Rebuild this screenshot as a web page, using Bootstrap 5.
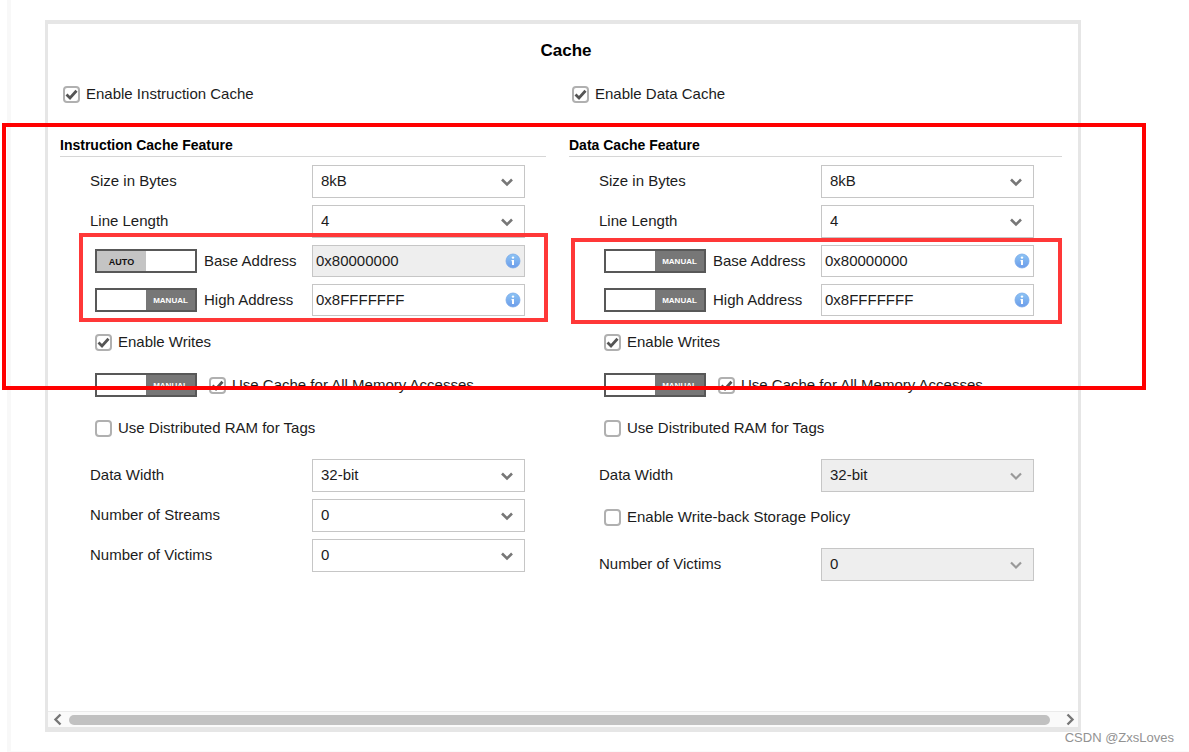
<!DOCTYPE html>
<html lang="en">
<head>
<meta charset="utf-8">
<meta name="viewport" content="width=device-width, initial-scale=1">
<title>Cache</title>
<link rel="stylesheet" href="https://cdn.jsdelivr.net/npm/bootstrap@5.3.0/dist/css/bootstrap.min.css">
<style>
  body { font: 15px/20px "Liberation Sans", Arial, sans-serif; color: #1c1c1c; background: #fff; }
  .page-frame { min-height: 100vh; margin-left: 7px; padding: 20px 108px 19px 34px; border-left: 4px solid #f8f8f8; border-bottom: 1px solid #fafafa; }
  .panel { border: solid #e6e6e6; border-width: 4px 3px 5px; }
  .panel-body { padding: 15px 0 20px 12px; }
  .panel-title { font-size: 17px; line-height: 24px; font-weight: bold; color: #000; margin: 0 0 19px; padding-right: 6px; }
  .section-title { font-size: 14px; line-height: 22px; font-weight: bold; color: #000; border-bottom: 1px solid #d6d6d6; margin: 28px 23px 8px 0; }
  .section-title.wide { margin-right: 16px; }
  .fields { display: flex; flex-direction: column; gap: 7px; padding-right: 44px; }
  .field { display: flex; align-items: center; }
  .field > label, .field > .lead-cell { flex: 0 0 252px; padding-left: 30px; padding-bottom: 2px; }
  .field > .lead-cell { display: flex; align-items: center; gap: 7px; padding-left: 35px; padding-bottom: 0; }
  .field .form-select, .field .form-control { font-size: 15px; line-height: 20px; color: #1c1c1c; border: 1px solid #c6c6c6; border-radius: 0; }
  .field .form-select { height: 33px; padding: 4px 36px 6px 8px; background-position: right 10px center; background-size: 14px 14px;
    background-image: url("data:image/svg+xml,%3Csvg xmlns='http://www.w3.org/2000/svg' viewBox='0 0 14 14'%3E%3Cpath d='M2 4.5 7 9.5 12 4.5' fill='none' stroke='%23777' stroke-width='2.6'/%3E%3C/svg%3E"); }
  .field .form-select:disabled { background-color: #eee; opacity: 1;
    background-image: url("data:image/svg+xml,%3Csvg xmlns='http://www.w3.org/2000/svg' viewBox='0 0 14 14'%3E%3Cpath d='M2 4.5 7 9.5 12 4.5' fill='none' stroke='%23999' stroke-width='2.2'/%3E%3C/svg%3E"); }
  .field .form-control { height: 32px; padding: 4px 30px 6px 3px; }
  .field .form-control:disabled { background: #eee; }
  .info { position: absolute; right: 4px; top: 8px; line-height: 0; border: 0; padding: 0; background: none; }
  .addresses { position: relative; display: flex; flex-direction: column; gap: 7px; margin-bottom: 1px; }
  .opt { display: flex; align-items: center; gap: 12px; height: 36px; padding-left: 35px; }
  .opt + .field { margin-top: 6px; }
  .tick { display: flex; align-items: center; gap: 6px; padding-left: 3px; height: 24px; }
  .opt .tick { padding-left: 0; }
  .tick .form-check-input { width: 17px; height: 17px; margin: 0; float: none; border: 2px solid #b0b0b0; border-radius: 4px; background-color: #fff; }
  .tick .form-check-input:checked { background-color: #fff; border-color: #b0b0b0; background-size: 13px 13px;
    background-image: url("data:image/svg+xml,%3Csvg xmlns='http://www.w3.org/2000/svg' viewBox='0 0 13 13'%3E%3Cpath d='M1.5 6.5 5 10 11.5 2.8' fill='none' stroke='%23555' stroke-width='2.8'/%3E%3C/svg%3E"); }
  .mode { display: flex; width: 102px; height: 24px; padding: 0; border: 2px solid #585858; background: #fff; font: bold 8px/20px "Liberation Sans", Arial, sans-serif; color: #fff; }
  .mode span { width: 50%; height: 20px; background: #777; padding-top: 1px; }
  .mode .auto { background: #c4c4c4; color: #111; font-size: 9px; }
  .mode.manual { justify-content: flex-end; }
  .mark-box { position: absolute; border: 4px solid #ff3838; pointer-events: none; }
  .mark-left { inset: -12px -23px -6px 19px; }
  .mark-right { inset: -7px -28px -8px 2px; }
  .mark-wide { top: 123px; height: 267px; left: 2px; right: 43px; border-color: #f00; }
  .h-scroll { display: flex; align-items: center; height: 16px; padding: 0 3px 0 5px; background: #fafafa; border-top: 1px solid #ebebeb; }
  .h-scroll button { border: 0; padding: 0; background: none; line-height: 0; }
  .thumb { flex: 1; height: 10px; margin: 0 16px 0 7px; border-radius: 5px; background: #c1c1c1; }
  .watermark { position: absolute; right: 15px; bottom: 4px; font-size: 13px; color: #929292; }
</style>
</head>
<body class="position-relative">
<svg width="0" height="0" class="position-absolute" aria-hidden="true">
  <defs>
    <linearGradient id="blue" x1="0" y1="0" x2="0" y2="1"><stop offset="0" stop-color="#8cc4f4"/><stop offset="1" stop-color="#6c9cea"/></linearGradient>
    <symbol id="info" viewBox="0 0 16 16"><circle cx="8" cy="8" r="7" fill="url(#blue)" stroke="#78a8e8" stroke-width=".8"/><circle cx="8" cy="4.6" r="1.2" fill="#fff"/><path d="M6.5 7h2.5v5H7V8.2h-.5z" fill="#fff"/></symbol>
  </defs>
</svg>
<div class="page-frame d-flex flex-column">
  <main class="panel flex-grow-1 d-flex flex-column">
    <form class="panel-body">
      <h1 class="panel-title text-center">Cache</h1>
      <div class="row g-0">
        <section class="col-6">
          <div class="tick"><input class="form-check-input" type="checkbox" id="i-on" checked><label for="i-on">Enable Instruction Cache</label></div>
          <h2 class="section-title">Instruction Cache Feature</h2>
          <div class="fields">
            <div class="field"><label for="i-size">Size in Bytes</label><select class="form-select" id="i-size"><option>8kB</option></select></div>
            <div class="field"><label for="i-line">Line Length</label><select class="form-select" id="i-line"><option>4</option></select></div>
            <div class="addresses">
              <div class="field">
                <div class="lead-cell"><button type="button" class="mode" aria-label="Base address mode"><span class="auto">AUTO</span></button><label for="i-base">Base Address</label></div>
                <div class="position-relative flex-grow-1"><input class="form-control" id="i-base" value="0x80000000" disabled><button type="button" class="info" aria-label="Info"><svg width="16" height="16"><use href="#info"/></svg></button></div>
              </div>
              <div class="field">
                <div class="lead-cell"><button type="button" class="mode manual" aria-label="High address mode"><span>MANUAL</span></button><label for="i-high">High Address</label></div>
                <div class="position-relative flex-grow-1"><input class="form-control" id="i-high" value="0x8FFFFFFF"><button type="button" class="info" aria-label="Info"><svg width="16" height="16"><use href="#info"/></svg></button></div>
              </div>
              <div class="mark-box mark-left"></div>
            </div>
            <div class="opt"><div class="tick"><input class="form-check-input" type="checkbox" id="i-wr" checked><label for="i-wr">Enable Writes</label></div></div>
            <div class="opt"><button type="button" class="mode manual" aria-label="Memory access mode"><span>MANUAL</span></button><div class="tick"><input class="form-check-input" type="checkbox" id="i-all" checked><label for="i-all">Use Cache for All Memory Accesses</label></div></div>
            <div class="opt"><div class="tick"><input class="form-check-input" type="checkbox" id="i-ram"><label for="i-ram">Use Distributed RAM for Tags</label></div></div>
            <div class="field"><label for="i-width">Data Width</label><select class="form-select" id="i-width"><option>32-bit</option></select></div>
            <div class="field"><label for="i-str">Number of Streams</label><select class="form-select" id="i-str"><option>0</option></select></div>
            <div class="field"><label for="i-vic">Number of Victims</label><select class="form-select" id="i-vic"><option>0</option></select></div>
          </div>
        </section>
        <section class="col-6">
          <div class="tick"><input class="form-check-input" type="checkbox" id="d-on" checked><label for="d-on">Enable Data Cache</label></div>
          <h2 class="section-title wide">Data Cache Feature</h2>
          <div class="fields">
            <div class="field"><label for="d-size">Size in Bytes</label><select class="form-select" id="d-size"><option>8kB</option></select></div>
            <div class="field"><label for="d-line">Line Length</label><select class="form-select" id="d-line"><option>4</option></select></div>
            <div class="addresses">
              <div class="field">
                <div class="lead-cell"><button type="button" class="mode manual" aria-label="Base address mode"><span>MANUAL</span></button><label for="d-base">Base Address</label></div>
                <div class="position-relative flex-grow-1"><input class="form-control" id="d-base" value="0x80000000"><button type="button" class="info" aria-label="Info"><svg width="16" height="16"><use href="#info"/></svg></button></div>
              </div>
              <div class="field">
                <div class="lead-cell"><button type="button" class="mode manual" aria-label="High address mode"><span>MANUAL</span></button><label for="d-high">High Address</label></div>
                <div class="position-relative flex-grow-1"><input class="form-control" id="d-high" value="0x8FFFFFFF"><button type="button" class="info" aria-label="Info"><svg width="16" height="16"><use href="#info"/></svg></button></div>
              </div>
              <div class="mark-box mark-right"></div>
            </div>
            <div class="opt"><div class="tick"><input class="form-check-input" type="checkbox" id="d-wr" checked><label for="d-wr">Enable Writes</label></div></div>
            <div class="opt"><button type="button" class="mode manual" aria-label="Memory access mode"><span>MANUAL</span></button><div class="tick"><input class="form-check-input" type="checkbox" id="d-all" checked><label for="d-all">Use Cache for All Memory Accesses</label></div></div>
            <div class="opt"><div class="tick"><input class="form-check-input" type="checkbox" id="d-ram"><label for="d-ram">Use Distributed RAM for Tags</label></div></div>
            <div class="field"><label for="d-width">Data Width</label><select class="form-select" id="d-width" disabled><option>32-bit</option></select></div>
            <div class="opt"><div class="tick"><input class="form-check-input" type="checkbox" id="d-wb"><label for="d-wb">Enable Write-back Storage Policy</label></div></div>
            <div class="field"><label for="d-vic">Number of Victims</label><select class="form-select" id="d-vic" disabled><option>0</option></select></div>
          </div>
        </section>
      </div>
    </form>
    <div class="h-scroll mt-auto">
      <button type="button" aria-label="Scroll left"><svg width="9" height="13" viewBox="0 0 9 13"><path d="M7.5 1.5 2.5 6.5l5 5" fill="none" stroke="#777" stroke-width="2.4"/></svg></button>
      <div class="thumb"></div>
      <button type="button" aria-label="Scroll right"><svg width="9" height="13" viewBox="0 0 9 13"><path d="M1.5 1.5 6.5 6.5l-5 5" fill="none" stroke="#777" stroke-width="2.4"/></svg></button>
    </div>
  </main>
</div>
<div class="mark-box mark-wide"></div>
<div class="watermark">CSDN @ZxsLoves</div>
<script src="https://cdn.jsdelivr.net/npm/bootstrap@5.3.0/dist/js/bootstrap.bundle.min.js"></script>
</body>
</html>
